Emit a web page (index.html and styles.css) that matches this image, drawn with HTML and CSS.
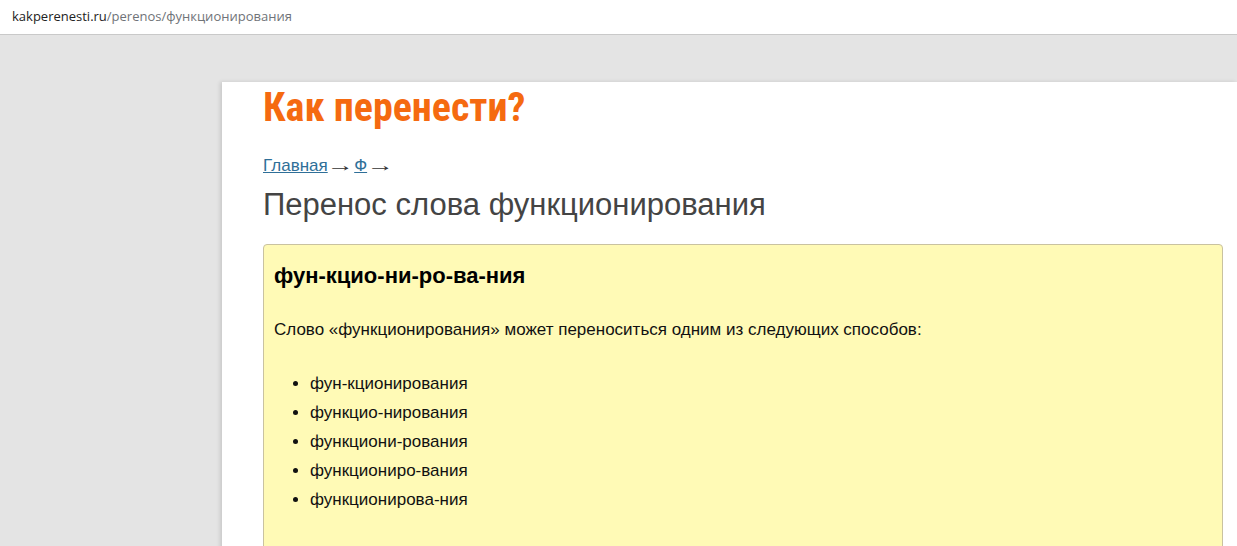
FILE: index.html
```html
<!DOCTYPE html>
<html lang="ru">
<head>
    <meta charset="UTF-8">
    <meta name="viewport" content="width=device-width, initial-scale=1.0">
    <title>Перенос слова функционирования</title>
    <link rel="stylesheet" href="styles.css">
</head>
<body>
    <div class="address-bar">
        <span class="domain">kakperenesti.ru</span><span class="path">/perenos/функционирования</span>
    </div>
    <div class="viewport">
        <div class="page">
            <div class="logo">Как перенести?</div>
            <div class="breadcrumbs">
                <a href="#">Главная</a> <span class="arrow">→</span> <a href="#">Ф</a> <span class="arrow">→</span>
            </div>
            <h1>Перенос слова функционирования</h1>
            <div class="result-box">
                <h2>фун-кцио-ни-ро-ва-ния</h2>
                <p>Слово «функционирования» может переноситься одним из следующих способов:</p>
                <ul>
                    <li>фун-кционирования</li>
                    <li>функцио-нирования</li>
                    <li>функциони-рования</li>
                    <li>функциониро-вания</li>
                    <li>функционирова-ния</li>
                </ul>
            </div>
        </div>
    </div>
</body>
</html>
```

FILE: styles.css
```css
body {
    margin: 0;
    background-color: #e4e4e4;
    font-family: "Liberation Sans", Arial, sans-serif;
    overflow: hidden;
    height: 546px;
}
.address-bar {
    height: 35px;
    line-height: 33px;
    background-color: #fff;
    border-bottom: 1px solid #c9c9c9;
    padding-left: 12px;
    font-family: "Open Sans", "Noto Sans", sans-serif;
    font-size: 13px;
    box-sizing: border-box;
}
.domain {
    color: #222;
}
.path {
    color: #6f7378;
}
.viewport {
    padding-top: 47px;
    padding-left: 222px;
}
.page {
    background-color: #fff;
    padding: 0 14px 80px 41px;
    min-height: 480px;
    box-shadow: -2px 0 4px rgba(0, 0, 0, 0.12);
}
.logo {
    font-family: "Roboto Condensed", "Liberation Sans Narrow", "DejaVu Sans Condensed", sans-serif;
    font-weight: bold;
    font-size: 40px;
    line-height: 48px;
    color: #f56a10;
    padding-top: 2px;
}
.breadcrumbs {
    margin-top: 24px;
    font-size: 17px;
    color: #333;
}
.breadcrumbs a {
    color: #2f6f98;
}
.arrow {
    display: inline-block;
    font-family: "Liberation Sans", sans-serif;
    font-size: 17px;
    width: 17px;
    text-align: center;
    transform: scaleX(1.6);
}
h1 {
    font-weight: normal;
    font-size: 31px;
    color: #444;
    margin: 11px 0 21px;
    line-height: 36px;
}
.result-box {
    background-color: #fffab6;
    border: 1px solid #c9c2a0;
    border-radius: 4px;
    padding: 18px 10px 60px;
    color: #111;
}
.result-box h2 {
    font-size: 22px;
    line-height: 26px;
    margin: 0 0 31px;
    color: #000;
}
.result-box p {
    font-size: 17px;
    line-height: 20px;
    margin: 0 0 29px;
}
.result-box ul {
    margin: 0;
    padding-left: 36px;
    font-size: 17px;
}
.result-box li {
    line-height: 29px;
}
```
